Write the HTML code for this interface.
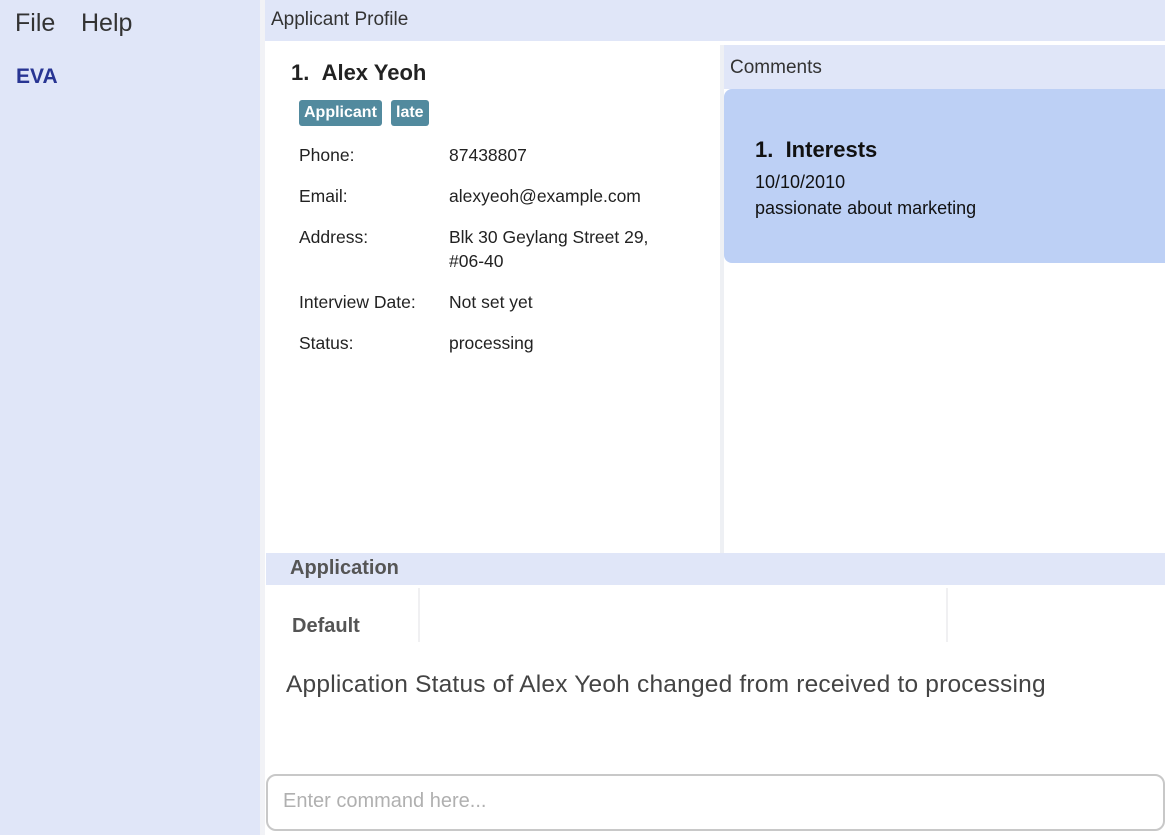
<!DOCTYPE html>
<html><head><meta charset="utf-8"><style>
*{margin:0;padding:0;box-sizing:border-box}
body{width:1165px;height:835px;position:relative;background:#fff;font-family:"Liberation Sans",sans-serif;color:#222;overflow:hidden}
.a{position:absolute}
.f{font-size:17.5px;line-height:24px}
</style></head><body>
<div class="a" style="left:0;top:0;width:260px;height:835px;background:#e0e6f8"></div>
<div class="a" style="left:260px;top:0;width:5px;height:835px;background:#f1f2f6"></div>
<div class="a" style="left:15px;top:9px;font-size:25px;color:#333">File</div>
<div class="a" style="left:81px;top:9px;font-size:25px;color:#333">Help</div>
<div class="a" style="left:16px;top:65px;font-size:21px;font-weight:bold;color:#283593">EVA</div>

<div class="a" style="left:265px;top:0;width:900px;height:41px;background:#e0e6f8"></div>
<div class="a" style="left:271px;top:9px;font-size:19px;color:#333">Applicant Profile</div>

<div class="a" style="left:291px;top:60px;font-size:22px;font-weight:bold;color:#222">1.&nbsp;&nbsp;Alex Yeoh</div>
<div class="a" style="left:299px;top:100px;height:26px;padding:0 5px;background:#528a9e;color:#fff;font-size:16px;font-weight:bold;line-height:26px;border-radius:3px">Applicant</div>
<div class="a" style="left:391px;top:100px;height:26px;padding:0 5px;background:#528a9e;color:#fff;font-size:16px;font-weight:bold;line-height:26px;border-radius:3px">late</div>
<div class="a f" style="left:299px;top:143px">Phone:</div>
<div class="a f" style="left:299px;top:184px">Email:</div>
<div class="a f" style="left:299px;top:225px">Address:</div>
<div class="a f" style="left:299px;top:290px">Interview Date:</div>
<div class="a f" style="left:299px;top:331px">Status:</div>
<div class="a f" style="left:449px;top:143px">87438807</div>
<div class="a f" style="left:449px;top:184px">alexyeoh@example.com</div>
<div class="a f" style="left:449px;top:225px">Blk 30 Geylang Street 29,<br>#06-40</div>
<div class="a f" style="left:449px;top:290px">Not set yet</div>
<div class="a f" style="left:449px;top:331px">processing</div>

<div class="a" style="left:720px;top:45px;width:4px;height:508px;background:#eef0f4"></div>
<div class="a" style="left:724px;top:45px;width:441px;height:44px;background:#e0e6f8"></div>
<div class="a" style="left:730px;top:57px;font-size:19px;color:#333">Comments</div>
<div class="a" style="left:724px;top:89px;width:441px;height:174px;background:#bdd0f5;border-radius:8px 0 0 8px"></div>
<div class="a" style="left:755px;top:137px;font-size:22px;font-weight:bold;color:#111">1.&nbsp;&nbsp;Interests</div>
<div class="a" style="left:755px;top:169px;font-size:18px;line-height:26px;color:#111">10/10/2010<br>passionate about marketing</div>

<div class="a" style="left:266px;top:553px;width:899px;height:32px;background:#e0e6f8"></div>
<div class="a" style="left:290px;top:557px;font-size:20px;font-weight:bold;color:#555">Application</div>
<div class="a" style="left:292px;top:615px;font-size:20px;font-weight:bold;color:#555">Default</div>
<div class="a" style="left:418px;top:588px;width:2px;height:54px;background:#f0f0f2"></div>
<div class="a" style="left:946px;top:588px;width:2px;height:54px;background:#f0f0f2"></div>
<div class="a" style="left:286px;top:671px;font-size:24.5px;color:#444;letter-spacing:0.2px">Application Status of Alex Yeoh changed from received to processing</div>

<div class="a" style="left:266px;top:774px;width:899px;height:57px;border:2px solid #c8c8c8;border-radius:10px;background:#fff"></div>
<div class="a" style="left:283px;top:790px;font-size:20px;color:#b0b0b0">Enter command here...</div>
</body></html>
